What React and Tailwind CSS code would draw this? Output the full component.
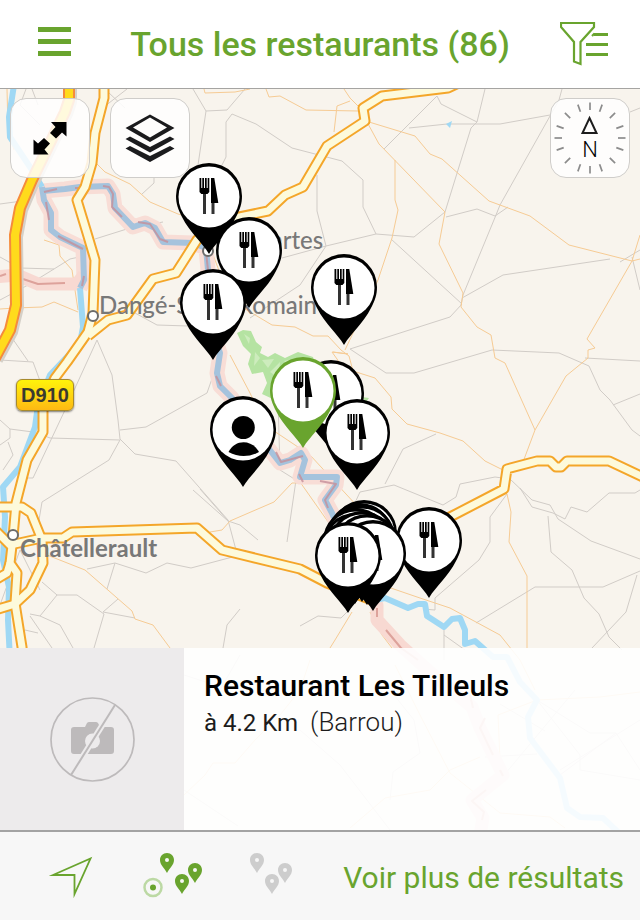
import React from "react";

const MAP_TOP = 89;
const MAP_WIDTH = 640;
const MAP_HEIGHT = 741;

const px = (x) => `${(x / MAP_WIDTH) * 100}%`;
const py = (y) => `${((y - MAP_TOP) / MAP_HEIGHT) * 100}%`;

const pins = [
  { id: "descartes-1", x: 176, y: 163 },
  { id: "descartes-2", x: 216, y: 217 },
  { id: "dange", x: 180, y: 269 },
  { id: "est", x: 311, y: 254 },
  { id: "barrou-2", x: 298, y: 360 },
  { id: "tilleuls", x: 270, y: 357, selected: true },
  { id: "lesigny", x: 324, y: 399 },
  { id: "moi", x: 210, y: 396, person: true },
  { id: "roche-1", x: 396, y: 507 },
  { id: "roche-2", x: 331, y: 500 },
  { id: "roche-3", x: 327, y: 503 },
  { id: "roche-4", x: 329, y: 505 },
  { id: "roche-5", x: 323, y: 508 },
  { id: "roche-6", x: 322, y: 513 },
  { id: "roche-7", x: 329, y: 511 },
  { id: "roche-8", x: 334, y: 514 },
  { id: "roche-9", x: 340, y: 520 },
  { id: "roche-10", x: 315, y: 522 },
];

const greyRoads = [
  "M193 89 L206 111 L227 110 L245 89",
  "M206 111 L198 165",
  "M222 165 L226 157 L226 122 L232 114 L256 124 L292 148 L342 161 L363 180 L363 207 L376 234 L414 237 L445 212 L471 128 L477 122 L485 89",
  "M317 175 L317 211 L326 246 L282 258",
  "M326 246 L376 234",
  "M326 246 L300 285 L250 318",
  "M384 149 L437 96 L441 104 L477 122",
  "M409 128 L447 124 L500 124 L550 115",
  "M562 89 L559 100 L500 205 L496 215 L463 295 L461 305",
  "M446 217 L477 209 L495 216 L508 207",
  "M391 239 L462 304 L450 317 L350 349",
  "M462 298 L503 275 L610 259",
  "M630 112 L640 108 M632 257 L640 290",
  "M350 349 L386 373 L414 373 L492 350 L559 353 L589 366 L600 390 L610 400 L632 430 L640 436",
  "M585 358 L640 361 M613 405 L640 394",
  "M620 262 L640 250",
  "M385 484 L403 449 L436 434",
  "M340 535 L360 492 L394 485 L443 505 L456 497 L460 484 L495 477 L510 479 L532 500 L550 505 L558 519 L591 541 L640 559",
  "M520 488 L532 507 L553 513 L565 519 L571 507 L587 512 L609 493 L635 493 L640 490",
  "M548 516 L551 552 L572 570 L584 598 L599 614 L609 637 L622 650",
  "M507 494 L490 517 L490 542 L479 560 L435 598 L435 610 L423 609",
  "M476 623 L535 587 L603 587 L640 571 M637 575 L626 612 L592 648",
  "M444 628 L444 660 M444 635 L465 650",
  "M0 204 L22 201 M26 89 L20 105 L40 125 M32 89 L38 105",
  "M127 89 L100 110 M108 92 L125 108 M154 177 L154 183 L142 194",
  "M95 239 L130 228 L163 222",
  "M0 257 L20 268 L54 269 L70 259 L88 255",
  "M0 300 L15 292 L28 285 L54 269",
  "M10 335 L28 361 M0 360 L33 362 L43 389",
  "M97 340 L65 410 L33 478 L25 478",
  "M97 340 L112 375 L118 420 L120 439 L135 454 L176 461 L228 520 L236 550",
  "M135 313 L157 325 L188 326",
  "M45 436 L50 438 L120 440 L109 460 L42 502 L39 520",
  "M120 430 L146 427 L207 393 L215 370",
  "M0 420 L10 429 L33 432 M10 429 L10 438 L0 445 M8 442 L13 455 L3 470",
  "M193 490 L228 521 L240 525 L258 540",
  "M278 400 L280 470 L296 480 L287 542",
  "M200 489 L228 521",
  "M87 569 L115 563 L146 573 L167 563 L191 568 L240 555",
  "M115 563 L107 589 M42 582 L57 595 L77 595 L104 614 L94 648",
  "M57 595 L40 616 L30 614 M118 599 L103 612 L135 618",
  "M40 616 L60 625 L73 648 M30 616 L52 648 M25 630 L38 633",
  "M0 605 L20 550 L40 590",
  "M240 609 L227 625 L223 648",
  "M300 626 L318 616 L341 618 L352 607",
  "M184 790 L238 826 M184 675 L215 685 M240 655 L220 690",
  "M300 730 L340 765 L390 830",
  "M390 800 L393 772 L420 753 L414 720 L390 690",
  "M485 757 L537 754 M575 690 L500 780 M500 704 L545 731",
  "M537 700 L580 755 L580 770 L640 780 M560 770 L640 720",
  "M537 700 L590 733 L616 733 L640 770 M616 733 L560 775",
];

const orangeRoads = [
  "M204 89 L205 93 L235 92 L250 89",
  "M266 89 L269 97 L280 96 L306 110 L358 111",
  "M344 89 L350 98 L361 109",
  "M334 132 L337 106 L350 101",
  "M367 122 L379 144 L445 212 L439 244 L463 293 L461 307 L477 327 L491 335 L495 358 L505 363 L535 430 L523 462",
  "M369 122 L415 136 L430 154 L442 159 L489 201 L530 216 L569 245 L632 261 L640 259",
  "M395 160 L395 200 L398 210 L392 238 L378 280 L345 350",
  "M632 261 L587 339 L595 348 L588 350 L588 358 L566 376 L535 430",
  "M632 261 L640 235",
  "M178 214 L200 220 L230 300 L272 325 L295 327 L313 336 L328 336 L341 350 L349 356 L353 371 L375 378 L391 397 L392 409 L407 424 L440 433 L463 441 L485 461 L503 470",
  "M333 352 L348 354 L332 352 L342 366",
  "M230 355 L250 393 L265 425 L310 455 L370 520",
  "M306 460 L300 482 L355 560",
  "M210 532 L222 530 L230 521 L274 502 L292 483 L302 483",
  "M507 494 L511 512 L509 542 L527 576 L527 648",
  "M382 585 L420 598 L450 608 L500 635 L520 660 L535 690",
  "M352 612 L335 640 L330 648 M370 612 L382 635 L392 648",
  "M42 553 L85 570 L132 611 L135 619 L153 625 L170 648",
  "M95 162 L105 172 L130 184 L150 202 L178 214",
  "M7 89 L8 130 L14 150",
  "M44 240 L59 245 L60 256 L72 270 L78 310",
  "M0 309 L15 308 L42 307 L54 302 L78 312",
  "M184 795 L205 775 L213 763 L235 763 L255 740 L280 715 L300 690 L310 660",
  "M350 828 L385 798 L430 790 L450 770 L480 757",
  "M395 665 L420 715 L450 773 L500 813 L550 817 L565 828",
  "M537 700 L600 697 L640 692 M500 760 L498 715 L537 700",
];

const majorRoads = [
  "M104 80 L104 98 L95 133 L92 163 L85 187 L77 200 L87 233 L95 260 L93 313 L88 332 L67 362 L55 378 L43 402 L43 432 L27 460 L16 503 L13 537 L10 563 L17 573 L15 603 L22 647 L28 720",
  "M88 336 L108 320 L127 315 L153 279 L176 273 L197 240 L215 222 L268 211 L285 195 L303 187 L327 146 L365 121 L363 108 L382 96 L448 88 L465 80",
  "M-5 530 L10 545 L42 538 L63 538 L72 532 L197 528 L222 550 L300 569 L327 583 L372 600 L400 545 L450 517 L504 489 L507 469 L537 461 L550 461 L556 467 L561 467 L567 461 L609 461 L645 478",
  "M-5 507 L22 507 L31 513 L42 540 L43 563 L30 590 L15 604 L-5 610",
  "M10 563 L7 573 L-5 580",
];

const motorway = "M69 80 L69 100 L65 112 L32 180 L20 208 L15 235 L16 305 L10 330 L-5 358";

const borderRivers = [
  "M42 187 L44 200 L51 213 L51 230 L60 237 L83 248 L84 280 L80 288",
  "M43 191 L65 189 L80 187 L108 186 L113 194 L115 208 L133 227 L145 223 L155 228 L163 242 L193 243 L206 248 L208 270 L212 330 L220 353 L217 373 L220 386 L232 398 L262 440 L280 463 L290 460 L301 453 L305 460 L300 477 L337 477 L336 485 L325 500 L332 513 L365 590",
];

const landBorders = [
  "M-5 277 L17 275 L38 284 L77 284 L84 275",
  "M365 590 L377 605 L377 620 L400 645 L430 672 L472 707 L480 728 L503 775 L472 800 L483 818 L480 835",
];

const rivers = [
  "M14 85 L9 117 L10 137 L30 167 L42 187",
  "M80 288 L83 327 L80 343 L50 375 L38 405 L35 427 L20 467 L3 487 L5 517 L3 560 L9 587 L8 620 L10 660",
  "M375 600 L385 598 L408 608 L418 604 L425 604 L427 616 L444 627 L452 619 L460 618 L465 630 L465 644 L475 641 L493 657 L507 657 L520 682 L537 700 L528 717 L530 738 L560 778 L567 808 L580 817 L603 818 L618 832",
];

function Lines({ paths, className, width }) {
  return (
    <g className={className} strokeWidth={width}>
      {paths.map((d) => (
        <path key={d} d={d} />
      ))}
    </g>
  );
}

function MapBackground() {
  return (
    <svg
      className="absolute inset-0 h-full w-full"
      viewBox="0 89 640 741"
      preserveAspectRatio="none"
      fill="none"
      strokeLinejoin="round"
      aria-hidden="true"
    >
      <path
        className="fill-[#b5e3a2]"
        d="M237 333 L243 330 L251 331 L256 342 L262 347 L260 353 L268 357 L275 353 L285 358 L298 352 L313 357 L320 380 L300 400 L275 400 L262 394 L267 383 L263 372 L252 374 L248 364 L251 354 L243 346 Z M362 397 L369 398 L366 402 Z"
      />
      <path
        className="fill-[#cdecbd]"
        d="M244 334 L250 338 L249 344 Z M262 360 L274 359 L268 368 Z M255 352 L260 358 L254 366 Z M270 372 L280 362 L279 378 Z M284 361 L292 359 L287 364 Z"
      />
      <Lines paths={greyRoads} className="stroke-[#d1ccc7]" width="1" />
      <Lines paths={orangeRoads} className="stroke-[#f6cb94]" width="1" />
      <Lines paths={borderRivers} className="stroke-[#f8ddd6]" width="15" />
      <Lines paths={landBorders} className="stroke-[#f8d9d2]" width="13" />
      <Lines paths={rivers} className="stroke-[#9fd8f4]" width="6" />
      <Lines paths={borderRivers} className="stroke-[#a5c3dd]" width="6" />
      <path
        className="stroke-[#c58f99]"
        strokeWidth="2"
        opacity="0.8"
        d="M44 192 L57 189 M75 188 L83 188 M103 186 L109 187 L113 194 L112 207 L122 217 M138 222 L150 224 L160 239 L168 242 M46 202 L49 220 M58 236 L83 249 M84 276 L82 286 M206 252 L208 270 M216 376 L221 386 M276 452 L281 462 L303 456 M299 474 L303 482 M320 481 L336 484 L325 500 L328 508"
      />
      <path
        className="stroke-[#dda29b]"
        strokeWidth="2"
        d="M0 276 L6 274 M23 279 L38 284 L65 283 M377 608 L377 617 M386 630 L401 648 L418 660 M470 695 L473 708 M485 718 L480 728 L493 755 M500 770 L503 776 M486 790 L472 801 L484 812 L482 820"
      />
      <path className="fill-[#9fd8f4]" d="M446 124 L452 121 L450 128 Z" />
      <Lines paths={majorRoads} className="stroke-[#f4a62a]" width="11" />
      <Lines paths={majorRoads} className="stroke-[#fdfadb]" width="7" />
      <path className="stroke-[#d5d0c8]" strokeWidth="12" d={motorway} transform="translate(2 2)" />
      <path className="stroke-[#f58b3c]" strokeWidth="12" d={motorway} />
      <path className="stroke-[#ffdb1c]" strokeWidth="8" d={motorway} />
      <g className="fill-white stroke-[#6b6b6b]" strokeWidth="2">
        <circle cx="93" cy="316" r="5" />
        <circle cx="13" cy="535" r="5" />
        <circle cx="208" cy="251" r="5" />
      </g>
    </svg>
  );
}

function MapLabel({ x, y, bold, children }) {
  return (
    <span
      className={`absolute whitespace-nowrap font-['Lato',sans-serif] text-2xl leading-7 text-[#787878] ${
        bold ? "font-bold" : "font-medium"
      }`}
      style={{ left: px(x), top: py(y) }}
    >
      {children}
    </span>
  );
}

function Pin({ pin }) {
  const label = pin.person ? "Ma position" : "Restaurant";
  return (
    <button
      type="button"
      aria-label={label}
      className={`absolute h-[91px] w-[66px] ${pin.selected ? "text-[#69a42e]" : "text-black"}`}
      style={{ left: px(pin.x), top: py(pin.y) }}
    >
      <svg className="block" width="66" height="91" viewBox="0 0 66 91">
        <path
          fill="currentColor"
          d="M33 91 C26 79 14 70 6 54 C2 46 0 41 0 33 A33 33 0 0 1 66 33 C66 41 64 46 60 54 C52 70 40 79 33 91 Z"
        />
        <circle cx="33" cy="34" r="30.5" className="fill-white" />
        {pin.person ? (
          <g className="fill-black">
            <circle cx="33.3" cy="31.5" r="11.5" />
            <path d="M18.5 56 C25 43 42 43 49 56 Q33.5 64 18.5 56 Z" />
          </g>
        ) : (
          <g className="fill-black">
            <path d="M23.5 15 H25.3 V25 H26.3 V15 H28 V25 H29 V15 H30.7 V25 H31.7 V15 H33.3 V29 L31.5 31 H25.3 L23.5 29 Z" />
            <path className="fill-[#333]" d="M27 31 H30 V51 H27 Z M35.5 39 H38.5 V51 H35.5 Z" />
            <path d="M35 15 H38.3 L42.3 40 H35 Z" />
          </g>
        )}
      </svg>
    </button>
  );
}

function MapButton({ label, children }) {
  return (
    <button
      type="button"
      aria-label={label}
      className="flex size-20 items-center justify-center rounded-2xl border border-[#cfcdca] bg-white/85"
    >
      {children}
    </button>
  );
}

function MenuIcon() {
  return (
    <svg width="48" height="44" viewBox="0 0 48 44" className="fill-[#69a42e]" aria-hidden="true">
      <path d="M6 5 h33 v5 h-33 z M6 17 h33 v5 h-33 z M6 29 h33 v5 h-33 z" />
    </svg>
  );
}

function FilterIcon() {
  return (
    <svg width="48" height="44" viewBox="0 0 48 44" fill="none" className="stroke-[#69a42e]" aria-hidden="true">
      <path strokeWidth="2.2" d="M1 1 H34 V5 L20.5 20 V42 L14 39.5 V20 L1 5 Z" />
      <path strokeWidth="3" d="M34 12.5 H48 M26 22.5 H48 M26 32.5 H48" />
      <path strokeWidth="2.2" d="M32 14 L34.5 11.5" />
    </svg>
  );
}

function ExpandIcon() {
  return (
    <svg width="34" height="34" viewBox="0 0 34 34" className="fill-black" aria-hidden="true">
      <path d="M18 1 H33.5 V15.5 L29 11.5 L23 17.5 L17 12 L22.5 6 Z" />
      <path d="M0.5 18.5 L5 22.5 L11 17 L17 22.5 L11.5 28.5 L15.5 33.5 H0.5 Z" />
    </svg>
  );
}

function LayersIcon() {
  return (
    <svg width="50" height="48" viewBox="0 0 50 48" className="fill-[#1b1b1d]" aria-hidden="true">
      <path
        fillRule="evenodd"
        d="M25 0.5 L49.5 14 L25 28 L0.5 14 Z M25 3.5 L8 13.5 L25 23.5 L42 13.5 Z"
      />
      <path d="M0.5 25 L5 22.5 L25 33 L45 22.5 L49.5 25 L25 38.5 Z" />
      <path d="M0.5 34.5 L5 32 L25 42 L45 32 L49.5 34.5 L25 48 Z" />
    </svg>
  );
}

const ticks = Array.from({ length: 16 }, (_, i) => {
  const spread = [0, 20, 45, 70];
  return Math.floor(i / 4) * 90 + spread[i % 4];
});

function CompassIcon() {
  return (
    <span className="relative block size-[78px]">
      <svg className="absolute inset-0" viewBox="0 0 78 78" fill="none" aria-hidden="true">
        {ticks.map((angle) => (
          <path
            key={angle}
            className="stroke-[#8c8c8c]"
            strokeWidth="1.7"
            d="M39 3.5 V11"
            transform={`rotate(${angle} 39 39)`}
          />
        ))}
        <path className="stroke-[#1d1d1d]" strokeWidth="2" d="M38.5 19 L45.5 34 H31.5 Z" />
      </svg>
      <span className="absolute inset-x-0 top-[37px] text-center text-[22px] leading-7 font-light text-black">N</span>
    </span>
  );
}

function NoPhotoIcon() {
  return (
    <svg width="86" height="86" viewBox="0 0 86 86" aria-hidden="true">
      <path
        className="fill-[#bdbabb]"
        d="M25 31 H36 L38 27 Q39 26 40 26 H47 Q48 26 49 27 L51 31 H62 Q65 31 65 34 V55 Q65 58 62 58 H25 Q22 58 22 55 V34 Q22 31 25 31 Z"
      />
      <circle cx="43.5" cy="45" r="7.5" className="fill-[#edebec]" />
      <path className="stroke-[#edebec]" strokeWidth="6" d="M66 9 L22 79" />
      <path className="stroke-[#bdbabb]" strokeWidth="2" d="M66 9 L22 79" />
      <circle cx="43.5" cy="43.5" r="41.5" fill="none" className="stroke-[#bdbabb]" strokeWidth="1.7" />
    </svg>
  );
}

function LocateIcon() {
  return (
    <svg width="46" height="46" viewBox="0 0 46 46" fill="none" className="stroke-[#69a42e]" aria-hidden="true">
      <path strokeWidth="1.8" strokeMiterlimit="10" d="M5 22 L42.5 5.5 L26.5 41 V22 Z" />
    </svg>
  );
}

const smallPin =
  "M7 0 C11 0 14 3 14 7 C14 12 9.5 15 7 20 C4.5 15 0 12 0 7 C0 3 3 0 7 0 Z M7 5 A2 2 0 1 0 7 9 A2 2 0 1 0 7 5 Z";

function SmallPins() {
  return (
    <g fill="currentColor" fillRule="evenodd">
      <path d={smallPin} />
      <path d={smallPin} transform="translate(28 10)" />
      <path d={smallPin} transform="translate(15 21)" />
    </g>
  );
}

function AroundMeIcon() {
  return (
    <svg width="60" height="46" viewBox="0 0 60 46" aria-hidden="true">
      <g transform="translate(18 0)">
        <SmallPins />
      </g>
      <circle cx="11" cy="34.5" r="8.5" fill="none" strokeWidth="2.5" className="stroke-[#bcd9a4]" />
      <circle cx="11" cy="34.5" r="3" fill="currentColor" />
    </svg>
  );
}

export default function App() {
  return (
    <div className="flex min-h-screen flex-col bg-white font-['Roboto',sans-serif]">
      <header className="flex h-[89px] shrink-0 items-center justify-between border-b border-[#a5a4a2] px-8">
        <button type="button" aria-label="Menu">
          <MenuIcon />
        </button>
        <h1 className="text-[34px] leading-10 font-medium text-[#69a42e]">Tous les restaurants (86)</h1>
        <button type="button" aria-label="Filtrer">
          <FilterIcon />
        </button>
      </header>

      <main className="relative flex flex-1 flex-col justify-between overflow-hidden bg-[#f8f4ed]">
        <MapBackground />
        <MapLabel x={218} y={226}>Descartes</MapLabel>
        <MapLabel x={99} y={291}>Dangé-Saint-Romain</MapLabel>
        <MapLabel x={20} y={534} bold>Châtellerault</MapLabel>
        <span
          className="absolute flex h-8 w-[58px] items-center justify-center rounded-md border border-[#a78a2c] bg-linear-to-b from-[#fff30a] to-[#fdb913] font-['Liberation_Sans',sans-serif] text-xl font-bold text-[#3a3a30] shadow-[0_1px_2px_rgba(0,0,0,0.5)]"
          style={{ left: px(16), top: py(379) }}
        >
          D910
        </span>
        {pins.map((pin) => (
          <Pin key={pin.id} pin={pin} />
        ))}

        <div className="relative flex justify-between px-[10px] pt-[9px]">
          <div className="flex gap-5">
            <MapButton label="Agrandir la carte">
              <ExpandIcon />
            </MapButton>
            <MapButton label="Calques">
              <LayersIcon />
            </MapButton>
          </div>
          <MapButton label="Orienter au nord">
            <CompassIcon />
          </MapButton>
        </div>

        <article className="relative flex h-[182px] bg-white/90">
          <div className="flex w-[184px] shrink-0 items-center justify-center bg-[#edebec]">
            <NoPhotoIcon />
          </div>
          <div className="flex flex-col px-5 pt-5">
            <h2 className="text-3xl leading-9 font-medium text-black">Restaurant Les Tilleuls</h2>
            <p className="flex items-baseline gap-3 text-[#1c1c1c]">
              <span className="text-2xl leading-9">à 4.2 Km</span>
              <span className="text-[26px] leading-9 font-light">(Barrou)</span>
            </p>
          </div>
        </article>
      </main>

      <footer className="flex h-[90px] shrink-0 items-center justify-between border-t-2 border-[#a3a3a3] bg-[#f7f7f7] pr-4 pl-12 text-[#69a42e]">
        <div className="flex items-center gap-12">
          <button type="button" aria-label="Me localiser">
            <LocateIcon />
          </button>
          <button type="button" aria-label="Résultats autour de moi">
            <AroundMeIcon />
          </button>
          <button type="button" aria-label="Tous les résultats" className="text-[#cdcdcd]">
            <svg width="44" height="46" viewBox="0 0 44 46" aria-hidden="true">
              <SmallPins />
            </svg>
          </button>
        </div>
        <a href="#resultats" className="pt-1 text-[30px] leading-10 whitespace-nowrap">
          Voir plus de résultats
        </a>
      </footer>
    </div>
  );
}
